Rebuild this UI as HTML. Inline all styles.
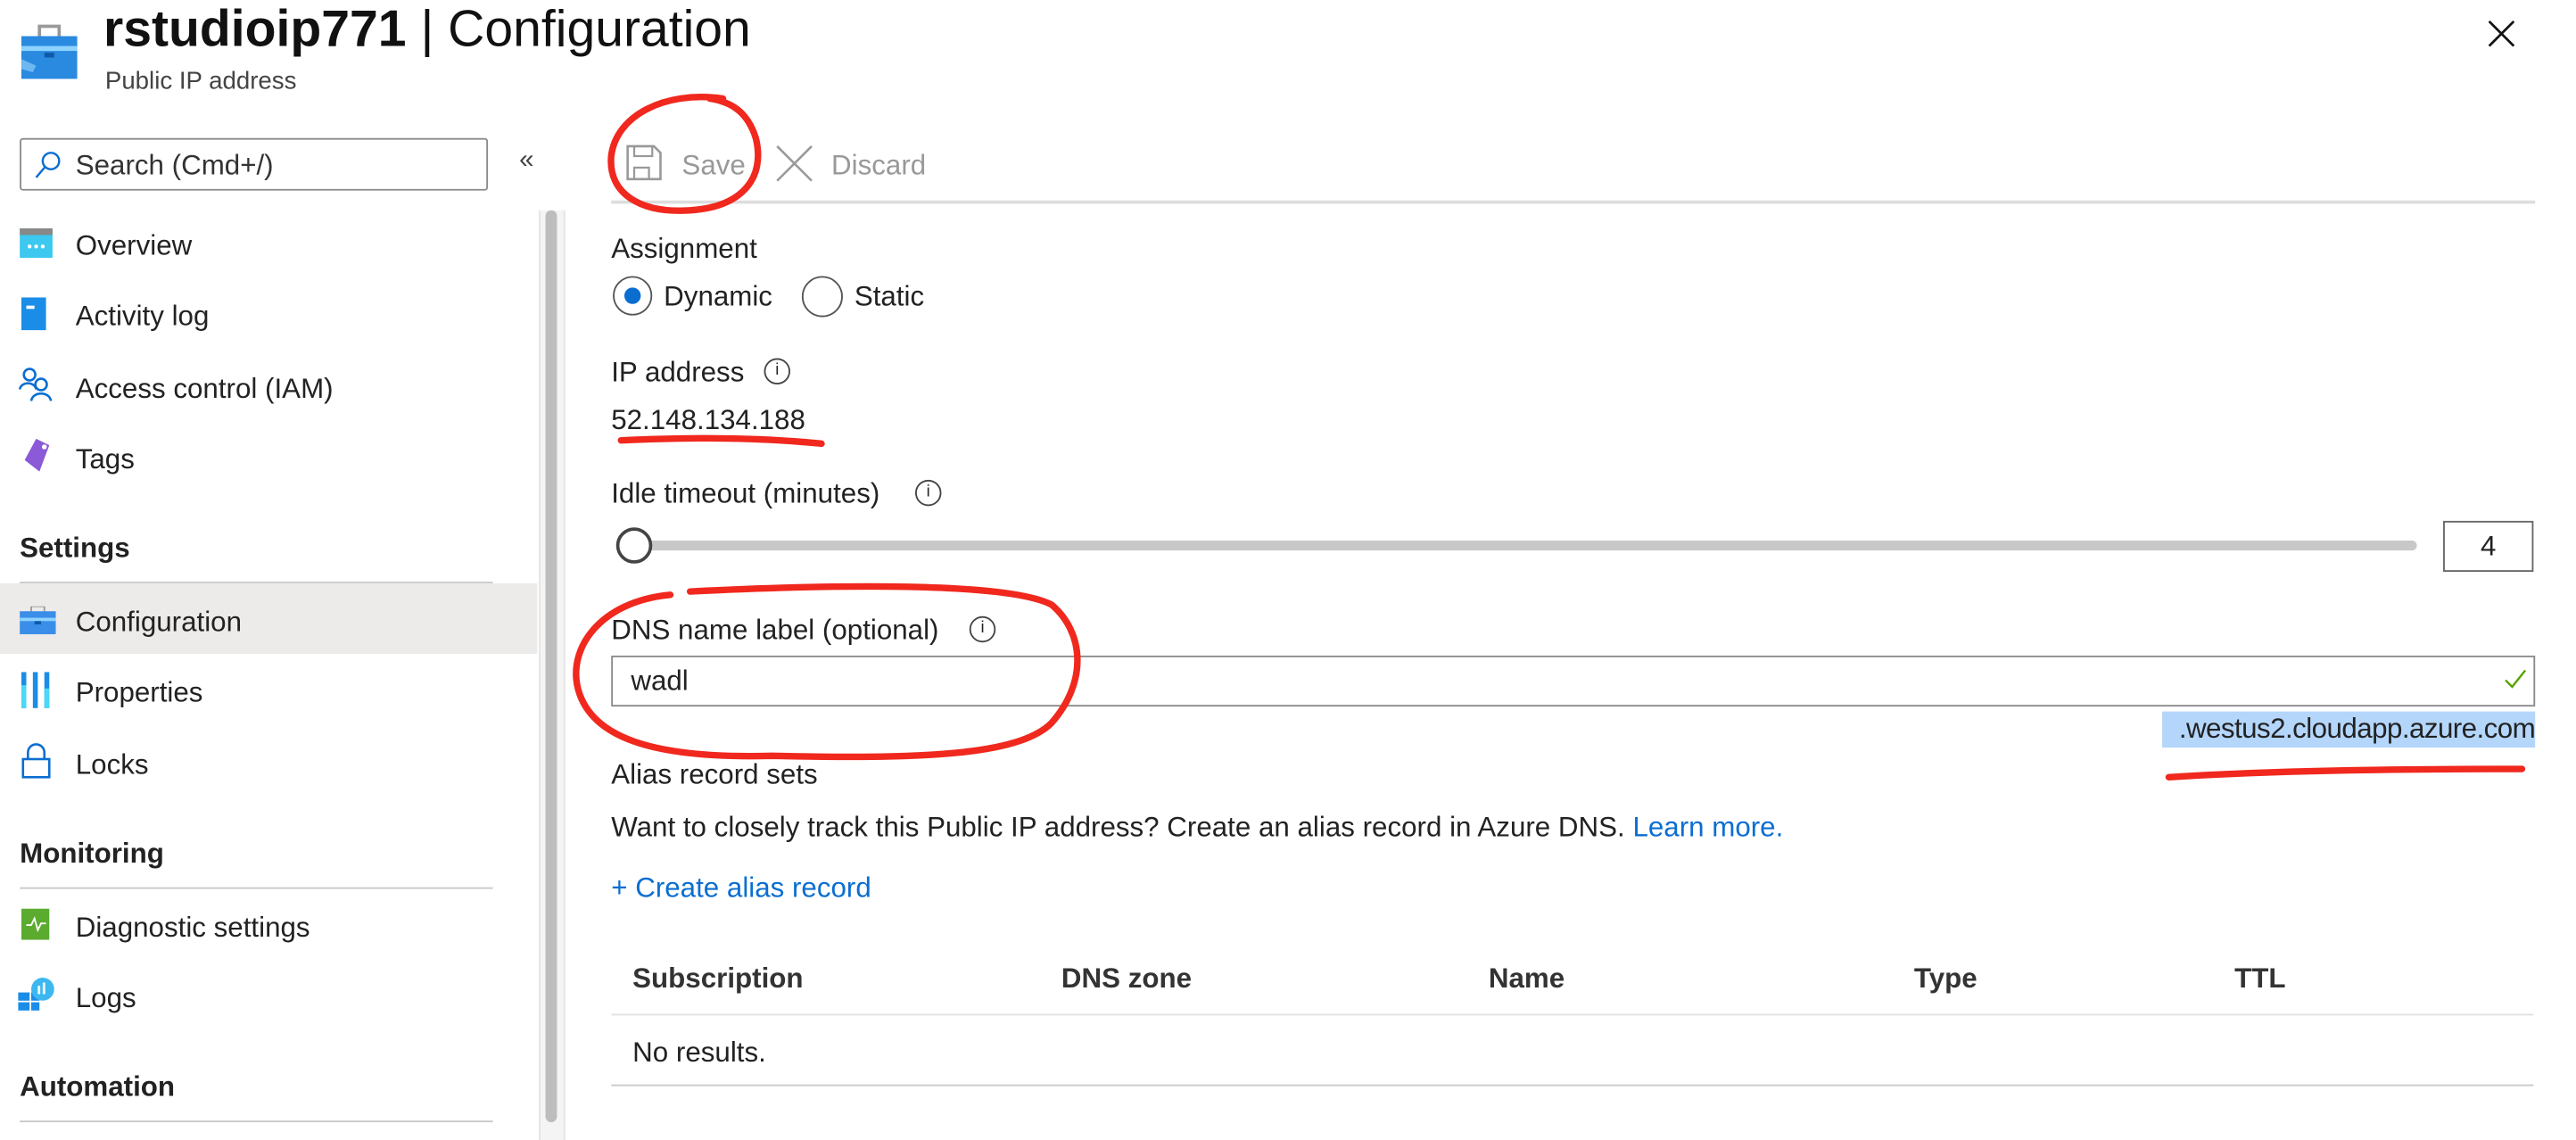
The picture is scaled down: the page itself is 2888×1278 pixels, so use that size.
<!DOCTYPE html>
<html><head><meta charset="utf-8"><style>
html,body{margin:0;padding:0;background:#fff;overflow:hidden}
#w{position:relative;width:1568px;height:694px;transform:scale(1.842);transform-origin:0 0;font-family:"Liberation Sans",sans-serif;color:#222}
.a{position:absolute;white-space:nowrap}
.t{font-size:17px;line-height:20px;margin-top:1px}
.sec{font-size:17px;font-weight:bold;line-height:20px;margin-top:1px}
.hl{position:absolute;height:1px;background:#c8c8c8}
</style></head><body><div id="w">
<svg class="a" style="left:12px;top:14px" width="36" height="36" viewBox="0 0 36 36"><rect x="12" y="2" width="12" height="7" fill="none" stroke="#999" stroke-width="2"/><rect x="1" y="8" width="34" height="26" fill="#2a8ae0"/><rect x="1" y="14" width="34" height="3" fill="#8ed2ff"/><rect x="15" y="18" width="6" height="3" fill="#0f5aa8"/><path d="M1 22 L10 26 L8 30 L1 28Z" fill="#6cb8f0"/></svg>
<div class="a" style="left:63px;top:-2px;font-size:31px;line-height:40px;color:#111"><b>rstudioip771</b> | Configuration</div>
<div class="a" style="left:64px;top:41px;font-size:15px;color:#444">Public IP address</div>
<svg class="a" style="left:1514px;top:12px" width="17" height="17"><path d="M1 1L16 16M16 1L1 16" stroke="#111" stroke-width="1.5"/></svg>
<div class="a" style="left:12px;top:84px;width:283px;height:30px;border:1px solid #8a8a8a;border-radius:2px"></div>
<svg class="a" style="left:20px;top:91px" width="18" height="18"><circle cx="11" cy="7" r="5" fill="none" stroke="#0a6ed1" stroke-width="1.3"/><path d="M7.5 10.5L2 17" stroke="#0a6ed1" stroke-width="1.3"/></svg>
<div class="a t" style="left:46px;top:90px;color:#333">Search (Cmd+/)</div>
<div class="a" style="left:316px;top:89px;font-size:16px;color:#444">«</div>
<svg class="a" style="left:12px;top:139px" width="20" height="18"><rect width="20" height="18" fill="#3cc8ef"/><rect width="20" height="4" fill="#888"/><circle cx="6" cy="11" r="1.2" fill="#fff"/><circle cx="10" cy="11" r="1.2" fill="#fff"/><circle cx="14" cy="11" r="1.2" fill="#fff"/></svg>
<div class="a t" style="left:46px;top:139px">Overview</div>
<svg class="a" style="left:13px;top:181px" width="16" height="20"><rect width="15" height="20" fill="#1a8de8"/><rect x="3" y="5" width="5" height="2" fill="#fff"/></svg>
<div class="a t" style="left:46px;top:182px">Activity log</div>
<svg class="a" style="left:11px;top:223px" width="22" height="22"><circle cx="7" cy="5" r="3.5" fill="none" stroke="#0a6ed1" stroke-width="1.4"/><path d="M1 14c1-5 9-5 10 0" fill="none" stroke="#0a6ed1" stroke-width="1.4"/><circle cx="14" cy="11" r="3.5" fill="none" stroke="#0a6ed1" stroke-width="1.4"/><path d="M8 21c1-6 11-6 12 0" fill="none" stroke="#0a6ed1" stroke-width="1.4"/></svg>
<div class="a t" style="left:46px;top:226px">Access control (IAM)</div>
<svg class="a" style="left:12px;top:266px" width="20" height="22"><path d="M10 1L18 5L12 21L3 14Z" fill="#8a5ad8"/><circle cx="15" cy="6" r="1.5" fill="#fff"/></svg>
<div class="a t" style="left:46px;top:269px">Tags</div>
<div class="a sec" style="left:12px;top:323px">Settings</div>
<div class="hl" style="left:12px;top:354px;width:288px"></div>
<div class="a" style="left:0;top:355px;width:327px;height:43px;background:#edebe9"></div>
<svg class="a" style="left:12px;top:369px" width="22" height="18"><rect x="7" y="0" width="8" height="4" fill="none" stroke="#999"/><rect y="3" width="22" height="14" fill="#3a8ee8"/><rect y="7" width="22" height="2" fill="#8ed2ff"/><rect x="9" y="9" width="4" height="2" fill="#0f5aa8"/></svg>
<div class="a t" style="left:46px;top:368px">Configuration</div>
<svg class="a" style="left:13px;top:409px" width="18" height="22"><rect x="0" width="3" height="22" fill="#1a8de8"/><rect x="7" width="3" height="22" fill="#1a8de8"/><rect x="14" width="3" height="22" fill="#1a8de8"/><rect x="0" y="8" width="3" height="14" fill="#4ad8f8"/><rect x="14" y="10" width="3" height="12" fill="#4ad8f8"/></svg>
<div class="a t" style="left:46px;top:411px">Properties</div>
<svg class="a" style="left:13px;top:452px" width="18" height="22"><path d="M4 10V6a5 5 0 0 1 10 0v4" fill="none" stroke="#0a6ed1" stroke-width="1.4"/><rect x="1" y="10" width="16" height="11" fill="none" stroke="#0a6ed1" stroke-width="1.4"/></svg>
<div class="a t" style="left:46px;top:455px">Locks</div>
<div class="a sec" style="left:12px;top:509px">Monitoring</div>
<div class="hl" style="left:12px;top:540px;width:288px"></div>
<svg class="a" style="left:13px;top:553px" width="18" height="19"><rect width="17" height="19" fill="#5aab2e"/><path d="M3 10h3l2-4 2 7 2-4h3" fill="none" stroke="#fff"/></svg>
<div class="a t" style="left:46px;top:554px">Diagnostic settings</div>
<svg class="a" style="left:11px;top:594px" width="22" height="22"><rect x="0" y="10" width="7" height="5" fill="#1a8de8"/><rect x="8" y="10" width="5" height="5" fill="#1a8de8"/><rect x="0" y="16" width="7" height="5" fill="#1a8de8"/><rect x="8" y="16" width="5" height="5" fill="#1a8de8"/><circle cx="15" cy="8" r="7" fill="#3cb8ef"/><rect x="12" y="6" width="1.5" height="5" fill="#fff"/><rect x="15" y="4" width="1.5" height="7" fill="#fff"/></svg>
<div class="a t" style="left:46px;top:597px">Logs</div>
<div class="a sec" style="left:12px;top:651px">Automation</div>
<div class="hl" style="left:12px;top:682px;width:288px"></div>
<div class="a" style="left:328px;top:128px;width:14px;height:570px;background:#f4f4f4;border-left:1px solid #e4e4e4;border-right:1px solid #e4e4e4"></div>
<div class="a" style="left:332px;top:128px;width:7px;height:555px;background:#bdbdbd;border-radius:4px"></div>
<svg class="a" style="left:381px;top:88px" width="22" height="22"><path d="M1 1h16l4 4v16H1Z" fill="none" stroke="#999" stroke-width="1.4"/><rect x="5" y="1" width="11" height="6" fill="none" stroke="#999" stroke-width="1.2"/><rect x="5" y="14" width="9" height="7" fill="none" stroke="#999" stroke-width="1.2"/></svg>
<div class="a t" style="left:415px;top:90px;color:#999">Save</div>
<svg class="a" style="left:472px;top:88px" width="23" height="23"><path d="M1 1L22 22M22 1L1 22" stroke="#999" stroke-width="1.4"/></svg>
<div class="a t" style="left:506px;top:90px;color:#999">Discard</div>
<div class="hl" style="left:372px;top:122px;width:1171px;height:2px;background:#ddd"></div>
<div class="a t" style="left:372px;top:141px">Assignment</div>
<div class="a" style="left:373px;top:168px;width:24px;height:24px;border:1px solid #555;border-radius:50%;box-sizing:border-box"></div>
<div class="a" style="left:380px;top:175px;width:10px;height:10px;background:#0a6ed1;border-radius:50%"></div>
<div class="a t" style="left:404px;top:170px">Dynamic</div>
<div class="a" style="left:488px;top:168px;width:25px;height:25px;border:1px solid #555;border-radius:50%;box-sizing:border-box"></div>
<div class="a t" style="left:520px;top:170px">Static</div>
<div class="a t" style="left:372px;top:216px">IP address</div>
<div class="a" style="left:465px;top:218px;width:14px;height:14px;border:1px solid #444;border-radius:50%;font-size:10px;text-align:center;line-height:14px">i</div>
<div class="a t" style="left:372px;top:245px">52.148.134.188</div>
<div class="a t" style="left:372px;top:290px">Idle timeout (minutes)</div>
<div class="a" style="left:557px;top:292px;width:14px;height:14px;border:1px solid #444;border-radius:50%;font-size:10px;text-align:center;line-height:14px">i</div>
<div class="a" style="left:386px;top:329px;width:1085px;height:6px;background:#c8c8c8;border-radius:3px"></div>
<div class="a" style="left:375px;top:321px;width:22px;height:22px;border:2px solid #444;border-radius:50%;box-sizing:border-box;background:#fff"></div>
<div class="a" style="left:1487px;top:317px;width:55px;height:31px;border:1px solid #666;box-sizing:border-box;font-size:17px;text-align:center;line-height:30px">4</div>
<div class="a t" style="left:372px;top:373px">DNS name label (optional)</div>
<div class="a" style="left:590px;top:375px;width:14px;height:14px;border:1px solid #444;border-radius:50%;font-size:10px;text-align:center;line-height:14px">i</div>
<div class="a" style="left:372px;top:399px;width:1171px;height:31px;border:1px solid #8a8a8a;box-sizing:border-box"></div>
<div class="a t" style="left:384px;top:404px">wadl</div>
<svg class="a" style="left:1524px;top:407px" width="14" height="12"><path d="M1 7l4 4 8-10" fill="none" stroke="#57a300" stroke-width="1.3"/></svg>
<div class="a t" style="left:1316px;top:433px;width:227px;height:22px;background:#b4d6fb;text-align:right;line-height:22px;letter-spacing:-0.3px;margin-top:0">.westus2.cloudapp.azure.com</div>
<div class="a t" style="left:372px;top:461px">Alias record sets</div>
<div class="a t" style="left:372px;top:493px">Want to closely track this Public IP address? Create an alias record in Azure DNS. <span style="color:#0a6ed1">Learn more.</span></div>
<div class="a t" style="left:372px;top:530px;color:#0a6ed1">+ Create alias record</div>
<div class="a t" style="left:385px;top:585px;font-weight:bold;color:#333">Subscription</div>
<div class="a t" style="left:646px;top:585px;font-weight:bold;color:#333">DNS zone</div>
<div class="a t" style="left:906px;top:585px;font-weight:bold;color:#333">Name</div>
<div class="a t" style="left:1165px;top:585px;font-weight:bold;color:#333">Type</div>
<div class="a t" style="left:1360px;top:585px;font-weight:bold;color:#333">TTL</div>
<div class="hl" style="left:372px;top:617px;width:1170px;background:#e2e2e2"></div>
<div class="a t" style="left:385px;top:630px">No results.</div>
<div class="hl" style="left:372px;top:660px;width:1170px"></div>
<svg class="a" style="left:0;top:0" width="1568" height="694" fill="none" stroke="#f0281e" stroke-width="4" stroke-linecap="round">
<path d="M440 60C405 55 375 70 372 95C370 118 390 130 420 128C452 126 466 108 460 84C455 68 445 62 432 60"/>
<path d="M378 268C420 266 460 266 500 270"/>
<path d="M408 362C365 366 345 395 352 420C360 448 395 462 470 460C560 462 620 460 640 440C662 415 660 385 640 368C615 355 520 355 420 360"/>
<path d="M1320 473C1380 469 1460 468 1535 468"/>
</svg>
</div></body></html>
